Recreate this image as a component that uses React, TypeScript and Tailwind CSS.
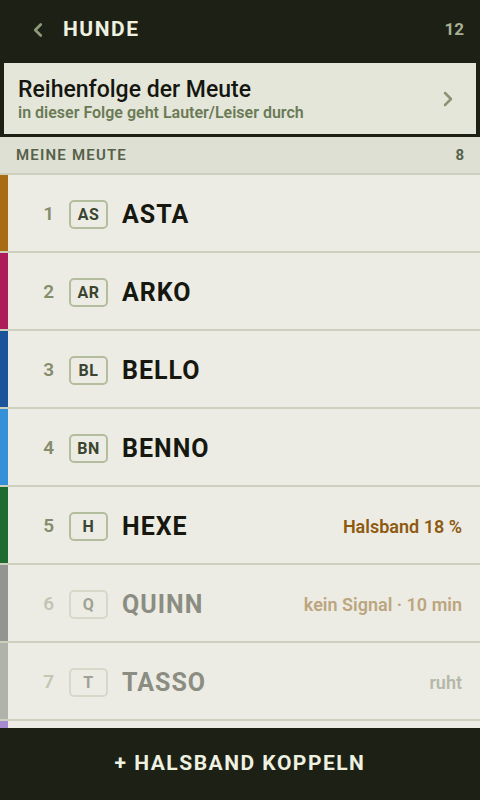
import { ChevronLeft, ChevronRight } from 'lucide-react';

type Dog = {
  nr: number;
  code: string;
  name: string;
  strip: string;
  status?: string;
  statusClass?: string;
  muted?: boolean;
  hidden?: boolean;
};

const dogs: Dog[] = [
  { nr: 1, code: 'AS', name: 'ASTA', strip: 'bg-[#a86c12]' },
  { nr: 2, code: 'AR', name: 'ARKO', strip: 'bg-[#ad1d5a]' },
  { nr: 3, code: 'BL', name: 'BELLO', strip: 'bg-[#1b5499]' },
  { nr: 4, code: 'BN', name: 'BENNO', strip: 'bg-[#3490d8]' },
  {
    nr: 5,
    code: 'H',
    name: 'HEXE',
    strip: 'bg-[#1e6b30]',
    status: 'Halsband 18 %',
    statusClass: 'text-[#8e5a12]',
  },
  {
    nr: 6,
    code: 'Q',
    name: 'QUINN',
    strip: 'bg-[#939590]',
    status: 'kein Signal · 10 min',
    statusClass: 'text-[#bca67f]',
    muted: true,
  },
  {
    nr: 7,
    code: 'T',
    name: 'TASSO',
    strip: 'bg-[#b0b3aa]',
    status: 'ruht',
    statusClass: 'text-[#b5b8a8]',
    muted: true,
  },
  // only the colour strip of this one peeks out above the bottom bar
  { nr: 8, code: '', name: '', strip: 'bg-[#a78bd0]', hidden: true },
];

const DogRow = ({ dog }: { dog: Dog }) => {
  return (
    <div className="flex h-[78px] flex-none border-b-2 border-[#ccd0bc] bg-[#ecece4]">
      <div className={`w-[8px] flex-none ${dog.strip}`} />
      {!dog.hidden && (
        <div className="flex flex-1 items-center pr-[18px] pt-[3px]">
          <div
            className={`w-[46px] text-right text-[19px] font-semibold ${
              dog.muted ? 'text-[#c2c6b2]' : 'text-[#858c6c]'
            }`}
          >
            {dog.nr}
          </div>
          <div
            className={`ml-[15px] flex h-[29px] w-[39px] items-center justify-center rounded-[5px] border-2 text-[16px] font-bold tracking-[0.5px] ${
              dog.muted ? 'border-[#d6d9c7] text-[#9fa394]' : 'border-[#b5bd9f] text-[#3b4530]'
            }`}
          >
            {dog.code}
          </div>
          <div
            className={`ml-[14px] text-[25px] font-bold tracking-[1px] ${
              dog.muted ? 'text-[#8b8d82]' : 'text-[#16180f]'
            }`}
          >
            {dog.name}
          </div>
          {dog.status && (
            <div className={`ml-auto text-[18px] font-semibold ${dog.statusClass}`}>
              {dog.status}
            </div>
          )}
        </div>
      )}
    </div>
  );
};

export default function App() {
  return (
    <div
      className="flex h-[800px] w-[480px] flex-col overflow-hidden bg-[#ecece4]"
      style={{ fontFamily: 'Roboto, "Liberation Sans", sans-serif' }}
    >
      <div className="flex-none bg-[#1d2015] pb-[3px]">
        <div className="flex h-[58px] items-center pl-[27px] pr-[16px] pt-[2px]">
          <ChevronLeft className="h-[22px] w-[22px] text-[#8f9a78]" strokeWidth={3} />
          <div className="ml-[14px] text-[21px] font-bold tracking-[1.5px] text-[#eef0e0]">
            HUNDE
          </div>
          <div className="ml-auto text-[17px] font-bold text-[#a9b092]">12</div>
        </div>
        <div className="mx-[4px] mt-[5px] flex h-[71px] items-center bg-[#e4e6da] pl-[14px] pr-[16px]">
          <div className="flex-1 pt-[1px]">
            <div className="text-[23px] font-medium leading-[27px] text-[#14160f]">
              Reihenfolge der Meute
            </div>
            <div className="text-[16px] font-semibold leading-[20px] text-[#6a7a55]">
              in dieser Folge geht Lauter/Leiser durch
            </div>
          </div>
          <ChevronRight className="h-[26px] w-[24px] text-[#8a9474]" strokeWidth={2.5} />
        </div>
      </div>
      <div className="flex h-[38px] flex-none items-center border-b-2 border-[#ccd0bc] bg-[#dde0d2] px-[16px]">
        <div className="text-[15px] font-semibold tracking-[1.2px] text-[#56604a]">MEINE MEUTE</div>
        <div className="ml-auto text-[15px] font-bold text-[#56604a]">8</div>
      </div>
      <div className="flex flex-1 flex-col overflow-hidden">
        {dogs.map((dog) => (
          <DogRow key={dog.nr} dog={dog} />
        ))}
      </div>
      <div className="flex h-[72px] flex-none items-center justify-center bg-[#1d2015]">
        <div className="text-[21px] font-bold tracking-[1.5px] text-[#eef0e0]">
          + HALSBAND KOPPELN
        </div>
      </div>
    </div>
  );
}
